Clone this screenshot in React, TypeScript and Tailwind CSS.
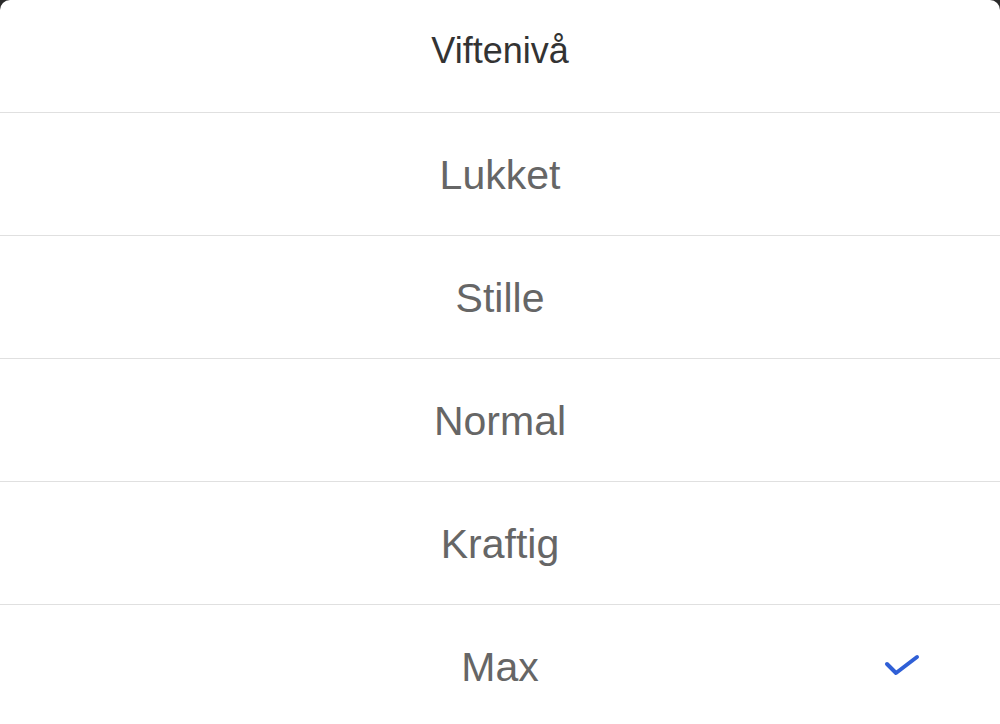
import React from "react";

const levels = ["Lukket", "Stille", "Normal", "Kraftig", "Max"];

export default function App() {
  const selected = "Max";
  return (
    <div className="h-[724px] w-full overflow-hidden bg-[#2a2a2a]">
      <div
        className="h-full bg-white rounded-t-[10px] flex flex-col"
        style={{ fontFamily: '"Liberation Sans", Arial, sans-serif' }}
      >
        {/* Title */}
        <div className="h-[113px] shrink-0 flex items-center justify-center pb-[10px] border-b border-[#e0e0e0]">
          <span className="text-[36px] text-[#333333]">Viftenivå</span>
        </div>

        {levels.map((level, i) => (
          <div
            key={level}
            className={`relative h-[123px] shrink-0 flex items-center justify-center pt-[3px] ${
              i < levels.length - 1 ? "border-b border-[#e0e0e0]" : ""
            }`}
          >
            <span className="text-[41px] text-[#666666]">{level}</span>
            {level === selected && (
              <svg
                className="absolute right-[80px] top-1/2 -translate-y-1/2 mt-[-2px]"
                width="36"
                height="24"
                viewBox="0 0 36 24"
                fill="none"
              >
                <path
                  d="M3 11 L12 20 L33 4"
                  stroke="#2f5fd6"
                  strokeWidth="4"
                  strokeLinecap="round"
                  strokeLinejoin="round"
                />
              </svg>
            )}
          </div>
        ))}
      </div>
    </div>
  );
}
